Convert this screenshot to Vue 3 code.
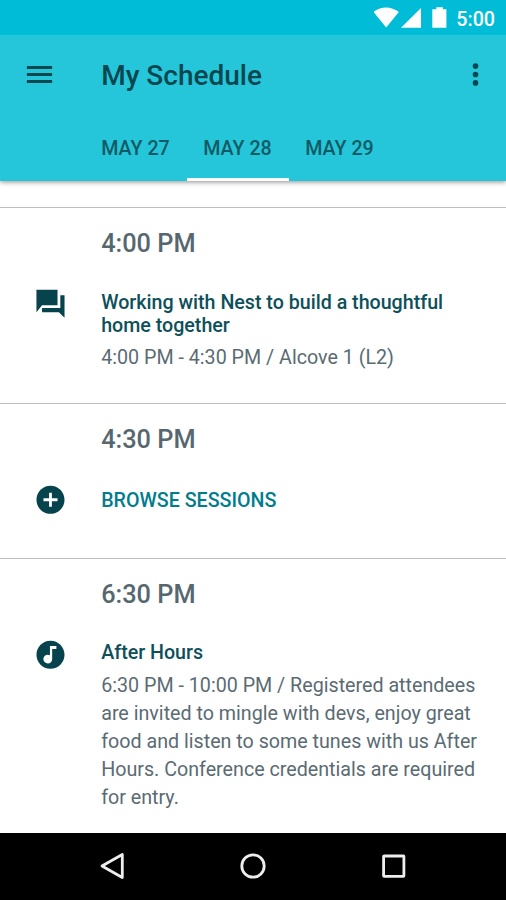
<script setup>
import { ref } from 'vue'

const days = ['MAY 27', 'MAY 28', 'MAY 29']
const active = ref(1)

const slots = [
  {
    time: '4:00 PM',
    kind: 'session',
    icon: 'M22 6h-3v9H6v3h12l4 4V6zM17 13V2H2v16l4-5h11z',
    title: 'Working with Nest to build a thoughtful home together',
    detail: '4:00 PM - 4:30 PM / Alcove 1 (L2)',
  },
  {
    time: '4:30 PM',
    kind: 'browse',
    icon: 'M12 2C6.480 2 2 6.480 2 12s4.480 10 10 10 10-4.480 10-10S17.520 2 12 2zm5 11h-4v4h-2v-4H7v-2h4V7h2v4h4v2z',
    title: 'BROWSE SESSIONS',
  },
  {
    time: '6:30 PM',
    kind: 'after',
    icon: 'M12 2C6.480 2 2 6.480 2 12s4.480 10 10 10 10-4.480 10-10S17.520 2 12 2zm4.200 5.900h-3v7.100c0 1.800-1.300 3.200-3.100 3.200S6.900 16.800 6.900 15.100s1.400-3.100 3.100-3.100c.6 0 1.100.15 1.600.4V5.700H16.200v2.200z',
    title: 'After Hours',
    detail:
      '6:30 PM - 10:00 PM / Registered attendees are invited to mingle with devs, enjoy great food and listen to some tunes with us After Hours. Conference credentials are required for entry.',
  },
]
</script>

<template>
  <div class="screen">
    <div class="status">
      <svg class="signals" viewBox="0 0 80 24">
        <path d="M-.5 5C7.200-1 17-1 24.800 5L12.200 20.400z" />
        <path d="M27 20.700L47 1V20.700z" />
        <path d="M58.300 2.300h4V.300h6.600v2h3.500v18.400H58.300z" />
      </svg>
      <span class="clock">5:00</span>
    </div>

    <header class="appbar">
      <div class="toolbar">
        <button class="menu" aria-label="Menu">
          <svg class="icon" viewBox="-0.46 -0.46 24.93 24.93"><path d="M3 18h18v-2H3v2zm0-5h18v-2H3v2zm0-7v2h18V6H3z" /></svg>
        </button>
        <h1>My Schedule</h1>
        <button class="more" aria-label="More">
          <svg class="icon" viewBox="-0.46 -0.46 24.93 24.93">
            <circle cx="12" cy="6" r="2" /><circle cx="12" cy="12" r="2" /><circle cx="12" cy="18" r="2" />
          </svg>
        </button>
      </div>
      <nav class="tabs">
        <button v-for="(d, i) in days" :key="d" :class="['tab', { active: i === active }]" @click="active = i">
          {{ d }}
        </button>
      </nav>
    </header>

    <main class="list">
      <section v-for="s in slots" :key="s.time" :class="['slot', s.kind]">
        <h2>{{ s.time }}</h2>
        <div class="row">
          <svg class="icon" viewBox="-0.46 -0.65 24.93 24.93"><path :d="s.icon" /></svg>
          <div class="text">
            <h3>{{ s.title }}</h3>
            <p v-if="s.detail">{{ s.detail }}</p>
          </div>
        </div>
      </section>
    </main>

    <footer class="navbar">
      <svg viewBox="0 0 32 32"><path d="M25.300 4.500V27.500L5 16z" /></svg>
      <svg viewBox="0 0 32 32"><circle cx="16" cy="16" r="11.200" /></svg>
      <svg viewBox="0 0 32 32"><rect x="5.600" y="6" width="20.300" height="20.300" rx=".5" /></svg>
    </footer>
  </div>
</template>

<style>
body {
  margin: 0;
  background: #fff;
}
</style>

<style scoped>
.screen {
  width: 506px;
  height: 900px;
  display: flex;
  flex-direction: column;
  overflow: hidden;
  background: #fff;
  font-family: Roboto, sans-serif;
  font-size: 19.68px;
}
button {
  border: 0;
  padding: 0;
  background: none;
  font: inherit;
  color: inherit;
}
h1, h2, h3, p {
  margin: 0;
  font-weight: 500;
}
svg {
  display: block;
  flex: none;
}
.icon {
  width: 35px;
  height: 35px;
  fill: currentColor;
}
.status {
  flex: none;
  box-sizing: border-box;
  height: 35px;
  padding: 7px 11px 0 0;
  display: flex;
  justify-content: flex-end;
  position: relative;
  z-index: 1;
  background: #00bcd7;
  color: #fff;
}
.signals {
  width: 80px;
  height: 24px;
  margin-right: 2.5px;
  fill: #fff;
}
.clock {
  font-weight: 500;
  line-height: 25px;
}
.appbar {
  flex: none;
  height: 146px;
  display: flex;
  flex-direction: column;
  position: relative;
  background: #26c6da;
  color: #07474f;
  box-shadow: 0 1px 5px rgba(0, 0, 0, 0.45);
}
.toolbar {
  height: 79px;
  padding: 0 13px 0 22px;
  display: flex;
  align-items: center;
}
.toolbar h1 {
  flex: 1;
  margin-left: 44.2px;
  padding-top: 2px;
  font-size: 28px;
  line-height: 34px;
}
.tabs {
  flex: 1;
  display: flex;
  padding-left: 84.5px;
}
.tab {
  box-sizing: border-box;
  width: 102px;
  padding-top: 5px;
  border-bottom: 3px solid transparent;
  font-weight: 500;
  color: #115b65;
}
.tab.active {
  border-color: #fff;
}
.list {
  flex: 1;
  padding-top: 26px;
}
.slot {
  box-sizing: border-box;
  padding: 20px 24px 0 33px;
  border-top: 1px solid #bdbdbd;
}
.session {
  height: 196px;
}
.browse {
  height: 155px;
}
.slot h2 {
  margin-left: 68.2px;
  font-size: 25.3px;
  line-height: 32px;
  color: #56676f;
}
.row {
  display: flex;
  margin-top: 31px;
  color: #07434d;
}
.row .icon {
  margin: -5px 33.2px 0 0;
}
.text h3 {
  font-size: 19.65px;
  line-height: 23px;
  color: #0d505a;
}
.text p {
  margin-top: 7px;
  font-weight: 400;
  line-height: 28.1px;
  color: #5a6b73;
}
.browse .text h3 {
  padding-top: 2px;
  color: #007c8c;
}
.after .row {
  margin-top: 30px;
}
.after .icon {
  margin-top: -4px;
}
.after .text p {
  margin-top: 8px;
}
.navbar {
  flex: none;
  box-sizing: border-box;
  height: 67px;
  padding-bottom: 1px;
  display: flex;
  justify-content: center;
  align-items: center;
  gap: 108.5px;
  background: #000;
}
.navbar svg {
  width: 32px;
  height: 32px;
  fill: none;
  stroke: #eee;
  stroke-width: 2.8;
  stroke-linejoin: round;
}
</style>
